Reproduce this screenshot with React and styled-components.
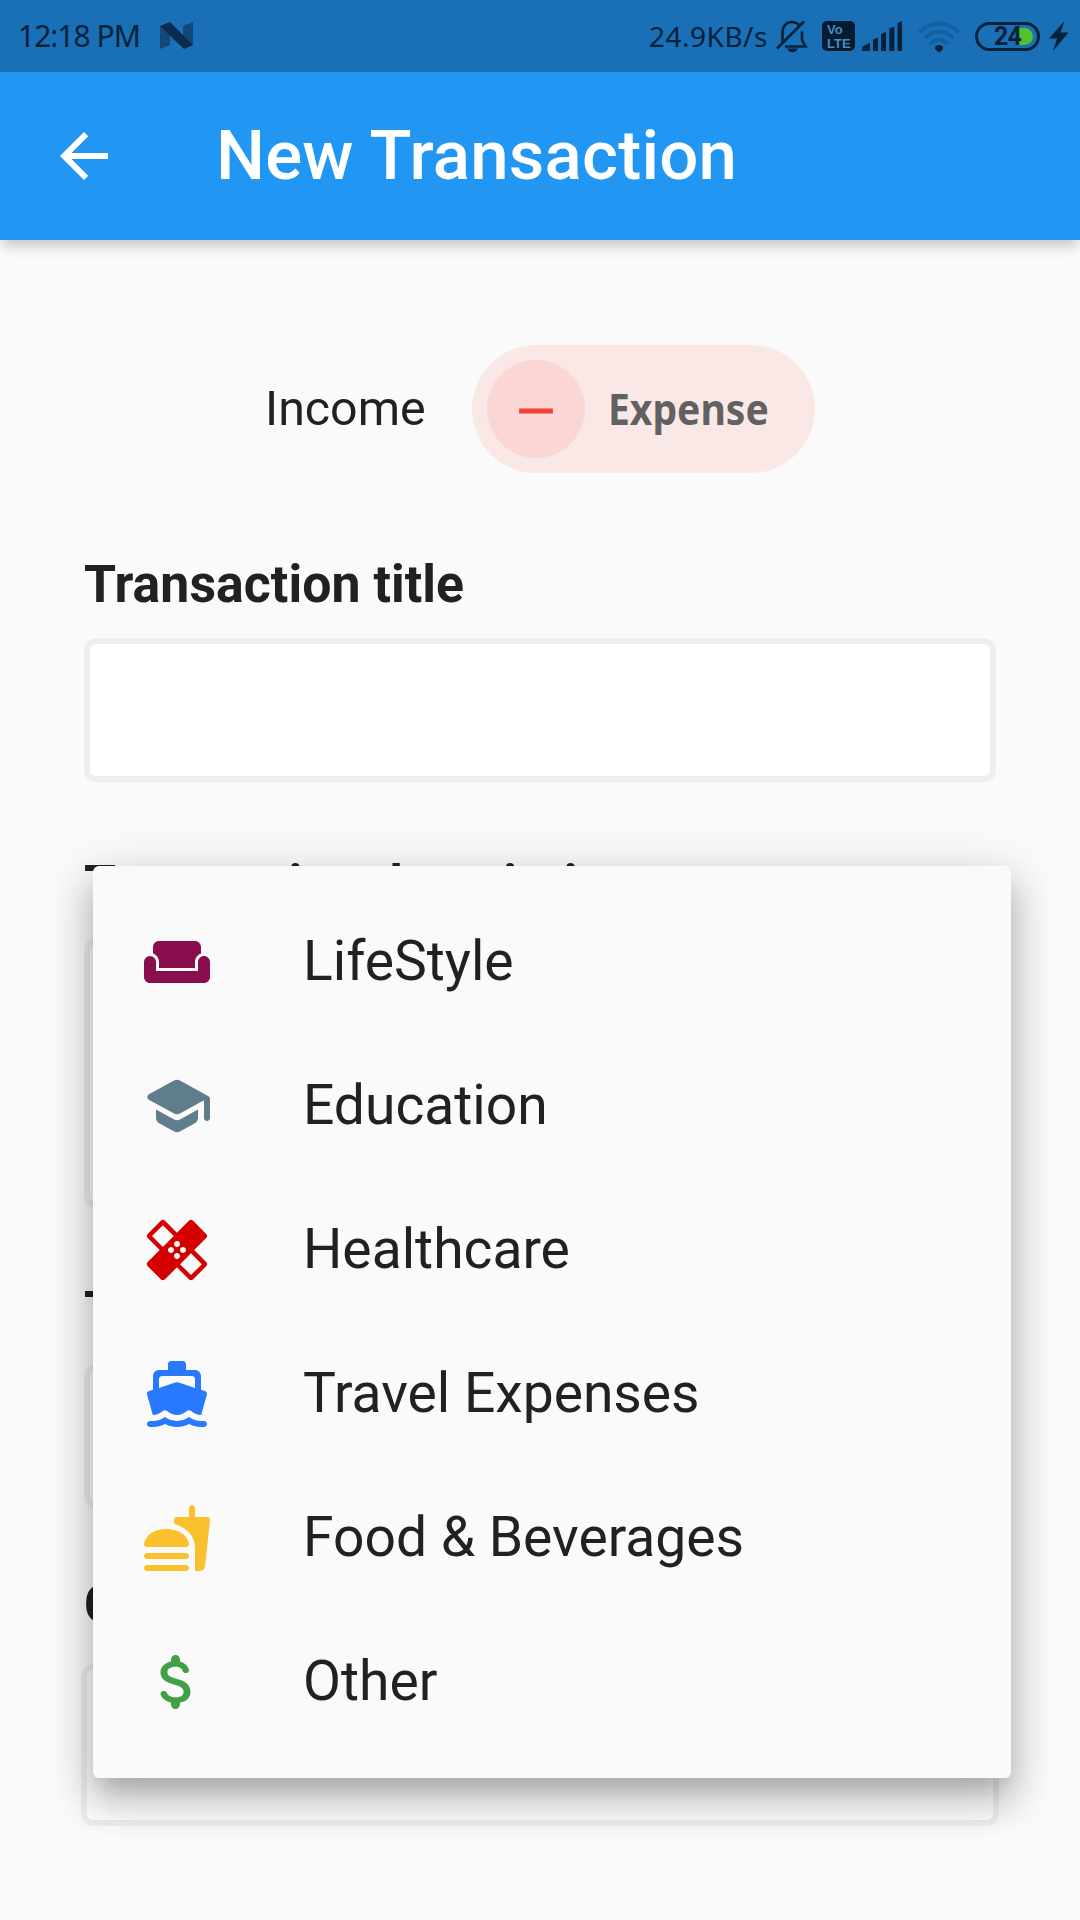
import React from "react";
import styled, { createGlobalStyle } from "styled-components";
import {
  MdArrowBack,
  MdHealing,
  MdRemove,
  MdWeekend,
} from "react-icons/md";

const GlobalStyle = createGlobalStyle`
  *, *::before, *::after { box-sizing: border-box; }
  body {
    margin: 0;
    background: #fafafa;
    color: #212121;
    font-family: Roboto, "Noto Sans", sans-serif;
  }
`;

const Screen = styled.div`
  position: relative;
  width: 1080px;
  height: 1920px;
  overflow: hidden;
  background: #fafafa;
`;

const StatusBar = styled.div`
  display: flex;
  align-items: center;
  justify-content: space-between;
  position: relative;
  z-index: 1;
  height: 72px;
  padding: 0 11px 0 18px;
  background: #1970b6;
  color: #06213a;
`;

const StatusGroup = styled.div`
  display: flex;
  align-items: center;
  height: 72px;
`;

const StatusText = styled.span`
  width: ${(p) => p.$width}px;
  font-family: "Noto Sans", sans-serif;
  font-size: ${(p) => p.$size}px;
  line-height: 72px;
  letter-spacing: ${(p) => p.$spacing}px;
  white-space: nowrap;
`;

const StatusIcon = styled.svg`
  display: block;
  flex: none;
  margin-left: ${(p) => p.$gap || 0}px;
`;

const VolteBadge = styled.div`
  display: flex;
  flex-direction: column;
  justify-content: center;
  gap: 1px;
  width: 33px;
  height: 30px;
  margin-left: 14px;
  padding-left: 5px;
  border-radius: 5px;
  background: #041b30;
  color: #4a8cc2;
  font-family: "Liberation Sans", sans-serif;
  font-size: 13px;
  font-weight: 700;
  line-height: 13px;
`;

const Battery = styled.div`
  display: flex;
  align-items: center;
  justify-content: flex-end;
  position: relative;
  width: 65px;
  height: 29px;
  margin-left: 15px;
  padding-right: 4px;
  border: 3px solid #06213a;
  border-radius: 15px;
`;

const BatteryFill = styled.div`
  width: 14px;
  height: 17px;
  border-radius: 0 9px 9px 0;
  background: #52c22b;
`;

const BatteryLevel = styled.span`
  position: absolute;
  left: 16px;
  top: 0;
  font-size: 25px;
  font-weight: 700;
  line-height: 24px;
  letter-spacing: -0.8px;
`;

const AppBar = styled.header`
  display: flex;
  align-items: center;
  height: 168px;
  padding-left: 48px;
  background: #2196f3;
  color: #fff;
  box-shadow:
    0 9px 12px -3px rgba(0, 0, 0, 0.18),
    0 3px 21px 0 rgba(0, 0, 0, 0.05);
`;

const Title = styled.h1`
  margin: 0 0 0 96px;
  padding-bottom: 2px;
  font-size: 69px;
  font-weight: 500;
  line-height: 81px;
  letter-spacing: 0.22px;
  white-space: nowrap;
`;

const Form = styled.main`
  display: flex;
  flex-direction: column;
  padding: 105px 84px 0;
`;

const TypeSwitch = styled.div`
  display: flex;
  align-items: center;
  justify-content: center;
  height: 128px;
  margin-bottom: 81px;
`;

const TypeOption = styled.button`
  width: 207px;
  padding: 0 0 2px;
  border: 0;
  background: none;
  color: #212121;
  font: 400 48.3px/57px Roboto, sans-serif;
  text-align: left;
`;

const ActiveType = styled.button`
  display: flex;
  align-items: center;
  width: 343px;
  height: 128px;
  padding: 0 0 0 15px;
  border: 0;
  border-radius: 64px;
  background: #fae8e6;
  color: #616161;
`;

const TypeBadge = styled.span`
  display: flex;
  align-items: center;
  justify-content: center;
  width: 98px;
  height: 98px;
  margin-right: 23px;
  padding-top: 3px;
  border-radius: 50%;
  background: #fad6d4;
  color: #f04438;
`;

const TypeName = styled.span`
  font: 700 43.4px/60px "Noto Sans", sans-serif;
  transform: scaleX(0.9);
  transform-origin: left center;
`;

const Label = styled.label`
  height: 61px;
  margin-top: ${(p) => p.$gap}px;
  font-size: 51.75px;
  font-weight: 700;
  line-height: 61px;
  letter-spacing: 0.06px;
  white-space: nowrap;
`;

const Field = styled.div`
  height: ${(p) => p.$height}px;
  margin: ${(p) => p.$gap || 23}px ${(p) => p.$bleed || 0}px 0;
  border: 6px solid #eee;
  border-radius: 12px;
  background: #fff;
`;

const Menu = styled.ul`
  position: absolute;
  left: 93px;
  top: 865.5px;
  width: 918px;
  margin: 0;
  padding: 24px 0;
  list-style: none;
  border-radius: 6px;
  background: #fafafa;
  box-shadow:
    0 15px 18px -9px rgba(0, 0, 0, 0.12),
    0 24px 36px 3px rgba(0, 0, 0, 0.19),
    0 9px 49px 6px rgba(0, 0, 0, 0.12);
`;

const MenuItem = styled.li`
  display: flex;
  align-items: center;
  height: 144px;
  padding-left: 48px;
  font-size: 55.2px;
  line-height: 65px;
  white-space: nowrap;
`;

const MenuIcon = styled.span`
  display: flex;
  width: 162px;
  color: ${(p) => p.$color};
`;

function Glyph({ d }) {
  return (
    <svg width="72" height="72" viewBox="0 0 24 24" fill="currentColor">
      <path d={d} />
    </svg>
  );
}

const SCHOOL =
  "M5 13.18v2.81c0 .73.4 1.41 1.04 1.76l5 2.73c.6.33 1.32.33 1.92 0l5-2.73c.64-.35 1.04-1.03 1.04-1.76v-2.81l-6.04 3.3c-.6.33-1.32.33-1.92 0L5 13.18zm6.04-9.66l-8.43 4.6c-.69.38-.69 1.38 0 1.76l8.43 4.6c.6.33 1.32.33 1.92 0L21 10.09V16c0 .55.45 1 1 1s1-.45 1-1V9.59c0-.37-.2-.7-.52-.88l-9.52-5.19a2.04 2.04 0 0 0-1.92 0z";
const BOAT =
  "M20 21c-1.39 0-2.78-.47-4-1.32-2.44 1.71-5.56 1.71-8 0C6.78 20.53 5.39 21 4 21H3c-.55 0-1 .45-1 1s.45 1 1 1h1c1.38 0 2.74-.35 4-.99 2.52 1.29 5.48 1.29 8 0 1.26.65 2.62.99 4 .99h1c.55 0 1-.45 1-1s-.45-1-1-1h-1zM3.95 19H4c1.27 0 2.42-.55 3.33-1.33.39-.34.95-.34 1.34 0C9.58 18.45 10.73 19 12 19s2.42-.55 3.33-1.33c.39-.34.95-.34 1.34 0C17.58 18.45 18.73 19 20 19h.05l1.89-6.68c.08-.26.06-.54-.06-.78s-.34-.42-.6-.5L20 10.62V6c0-1.1-.9-2-2-2h-3V2c0-.55-.45-1-1-1h-4c-.55 0-1 .45-1 1v2H6c-1.1 0-2 .9-2 2v4.62l-1.29.42a1.007 1.007 0 0 0-.66 1.28L3.95 19zM7 6h10c.55 0 1 .45 1 1v2.97l-5.38-1.77a2 2 0 0 0-1.24 0L6 9.97V7c0-.55.45-1 1-1z";
const FAST_FOOD =
  "M2 21h13c.55 0 1 .45 1 1s-.45 1-1 1H2c-.55 0-1-.45-1-1s.45-1 1-1zM2 17h13c.55 0 1 .45 1 1s-.45 1-1 1H2c-.55 0-1-.45-1-1s.45-1 1-1zM8.5 9C4.9 9 1.6 10.7 1.02 13.9c-.1.6.35 1.1.96 1.1h13.05c.6 0 1.06-.5.96-1.1C15.4 10.7 12.1 9 8.5 9zM18 5V2c0-.55-.45-1-1-1s-1 .45-1 1v3h-4c-.6 0-1.07.5-1 1.1l.15 1.32C14.1 8.1 18 10.6 18 15.2V23h1.72c.84 0 1.53-.65 1.63-1.47L23 6.1c.06-.6-.4-1.1-1-1.1z";
const DOLLAR =
  "M11.8 10.9c-2.27-.59-3-1.2-3-2.15 0-1.09 1.01-1.85 2.7-1.85 1.42 0 2.13.54 2.39 1.4.12.4.45.7.87.7h.3c.66 0 1.13-.65.9-1.27-.42-1.18-1.4-2.16-2.96-2.54V4.5c0-.83-.67-1.5-1.5-1.5S10 3.67 10 4.5v.66c-1.94.42-3.5 1.68-3.5 3.61 0 2.31 1.91 3.46 4.7 4.13 2.5.6 3 1.48 3 2.41 0 .69-.49 1.79-2.7 1.79-1.65 0-2.5-.59-2.83-1.43-.15-.39-.49-.67-.9-.67h-.28c-.67 0-1.14.68-.89 1.3.57 1.39 1.9 2.21 3.4 2.53v.67c0 .83.67 1.5 1.5 1.5s1.5-.67 1.5-1.5v-.65c1.95-.37 3.5-1.5 3.5-3.55 0-2.84-2.43-3.81-4.7-4.4z";

const categories = [
  { name: "LifeStyle", color: "#880e4f", icon: <MdWeekend size={72} /> },
  { name: "Education", color: "#607d8b", icon: <Glyph d={SCHOOL} /> },
  { name: "Healthcare", color: "#d50000", icon: <MdHealing size={72} /> },
  { name: "Travel Expenses", color: "#2979ff", icon: <Glyph d={BOAT} /> },
  { name: "Food & Beverages", color: "#fbc02d", icon: <Glyph d={FAST_FOOD} /> },
  { name: "Other", color: "#43a047", icon: <Glyph d={DOLLAR} /> },
];

function NougatIcon() {
  return (
    <StatusIcon width="34" height="28" viewBox="0 0 34 28">
      <path d="M0 4 10 12V23L0 27zM33 0 23 4V15L33 23z" fill="#11497a" />
      <path d="M0 4 10 0 33 23 24 27z" fill="#0a2b4a" />
    </StatusIcon>
  );
}

function MutedBellIcon() {
  return (
    <StatusIcon width="32" height="33" viewBox="0 0 32 33" $gap={8}>
      <g fill="none" stroke="#06213a" strokeWidth="2.6">
        <path d="M6.5 22V13C6.5 6 10.500 2 16 2c3 0 5.500 1.200 7.200 3.200M26 11.500V20l3.500 6.500H9" />
        <path d="M1 28.500 28 1.500" />
      </g>
      <path d="M11 28.500h11c-1 2.400-3 3.800-5.500 3.800s-4.500-1.400-5.500-3.800z" fill="#06213a" />
    </StatusIcon>
  );
}

function SignalIcon() {
  return (
    <StatusIcon width="40" height="30" viewBox="0 0 40 30" $gap={7}>
      <path
        d="M0 26 8 21.500V30H0zM11 18.500l5-2V30h-5zM19 13l5-2V30h-5zM27.300 7.500l5-2V30h-5zM35.500 2 40 0V30h-4.500z"
        fill="#06213a"
      />
    </StatusIcon>
  );
}

function WifiIcon() {
  return (
    <StatusIcon width="42" height="31" viewBox="0 0 42 31" $gap={16}>
      <g fill="none" stroke="#1460a0" strokeWidth="4">
        <path d="M1.500 11.500C12.500-.5 29.500-.5 40.500 11.500" />
        <path d="M7 17.300c8-8.600 20-8.600 28 0" />
        <path d="M12.500 22.800c5-5 12-5 17 0" />
      </g>
      <path d="M17 27.200c0-4.200 8-4.200 8 0 0 1.200-2.800 3.800-4 3.800s-4-2.600-4-3.800z" fill="#06213a" />
    </StatusIcon>
  );
}

function BoltIcon() {
  return (
    <StatusIcon width="20" height="30" viewBox="0 0 20 30" $gap={9}>
      <path d="M15.500 0 0 17.500h8L4 30l15.500-18.500h-8z" fill="#06213a" />
    </StatusIcon>
  );
}

export default function App() {
  return (
    <>
      <GlobalStyle />
      <Screen>
        <StatusBar>
          <StatusGroup>
            <StatusText $size={30} $spacing={-1} $width={142}>
              12:18 PM
            </StatusText>
            <NougatIcon />
          </StatusGroup>
          <StatusGroup>
            <StatusText $size={28} $spacing={0.5} $width={119}>
              24.9KB/s
            </StatusText>
            <MutedBellIcon />
            <VolteBadge>
              <span>Vo</span>
              <span>LTE</span>
            </VolteBadge>
            <SignalIcon />
            <WifiIcon />
            <Battery>
              <BatteryFill />
              <BatteryLevel>24</BatteryLevel>
            </Battery>
            <BoltIcon />
          </StatusGroup>
        </StatusBar>
        <AppBar>
          <MdArrowBack size={72} />
          <Title>New Transaction</Title>
        </AppBar>
        <Form>
          <TypeSwitch>
            <TypeOption>Income</TypeOption>
            <ActiveType>
              <TypeBadge>
                <MdRemove size={58} />
              </TypeBadge>
              <TypeName>Expense</TypeName>
            </ActiveType>
          </TypeSwitch>
          <Label $gap={0}>Transaction title</Label>
          <Field $height={144} />
          <Label $gap={72}>Transaction description</Label>
          <Field $height={270} />
          <Label $gap={72}>Transaction amount</Label>
          <Field $height={144} />
          <Label $gap={66}>Category</Label>
          <Field $height={162} $gap={29} $bleed={-3} />
        </Form>
        <Menu>
          {categories.map((c) => (
            <MenuItem key={c.name}>
              <MenuIcon $color={c.color}>{c.icon}</MenuIcon>
              {c.name}
            </MenuItem>
          ))}
        </Menu>
      </Screen>
    </>
  );
}
